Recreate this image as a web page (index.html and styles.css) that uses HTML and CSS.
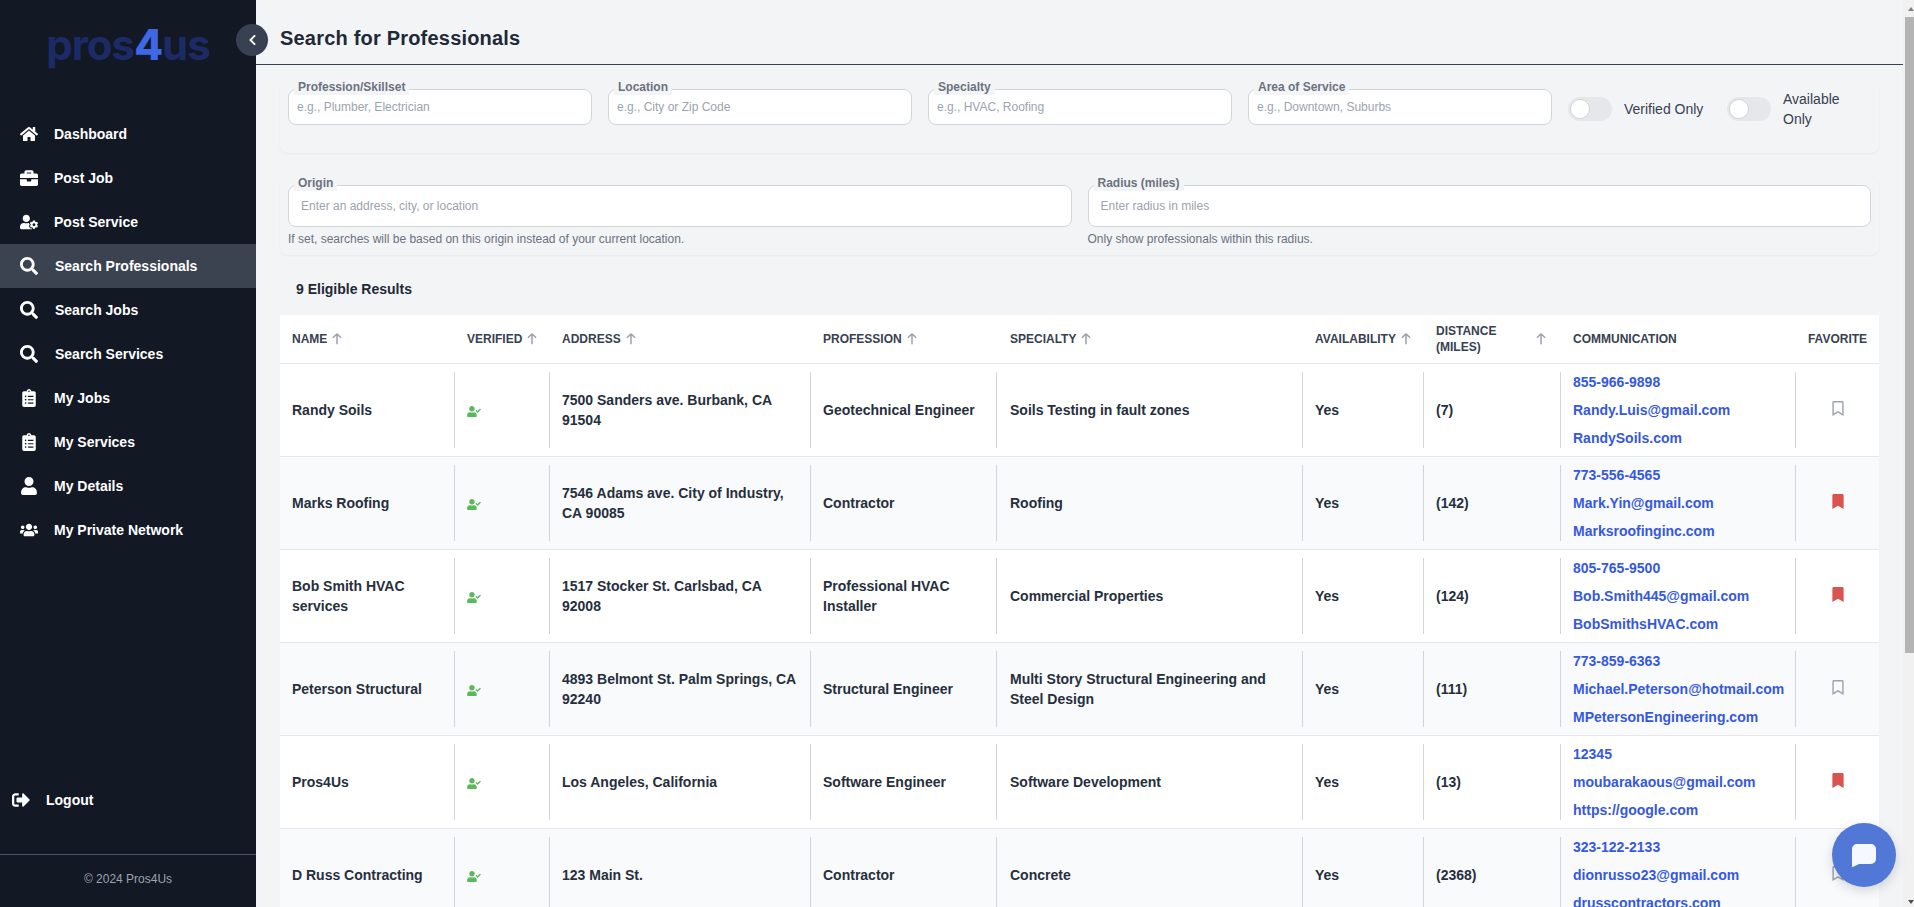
FILE: index.html
```html
<!DOCTYPE html>
<html lang="en">
<head>
<meta charset="utf-8">
<title>Search for Professionals - Pros4Us</title>
<link rel="stylesheet" href="styles.css">
</head>
<body>
<svg class="sprite" aria-hidden="true">
  <symbol id="i-home" viewBox="0 0 576 512"><path d="M280.37 148.26L96 300.11V464a16 16 0 0 0 16 16l112.06-.29a16 16 0 0 0 15.92-16V368a16 16 0 0 1 16-16h64a16 16 0 0 1 16 16v95.64a16 16 0 0 0 16 16.05L464 480a16 16 0 0 0 16-16V300L295.67 148.26a12.19 12.19 0 0 0-15.3 0zM571.6 251.47L488 182.56V44.05a12 12 0 0 0-12-12h-56a12 12 0 0 0-12 12v72.61L318.47 43a48 48 0 0 0-61 0L4.34 251.47a12 12 0 0 0-1.6 16.9l25.5 31A12 12 0 0 0 45.15 301l235.22-193.74a12.19 12.19 0 0 1 15.3 0L530.9 301a12 12 0 0 0 16.9-1.6l25.5-31a12 12 0 0 0-1.7-16.93z"/></symbol>
  <symbol id="i-briefcase" viewBox="0 0 512 512"><path d="M320 336c0 8.84-7.16 16-16 16h-96c-8.84 0-16-7.16-16-16v-48H0v144c0 25.6 22.4 48 48 48h416c25.6 0 48-22.4 48-48V288H320v48zm144-208h-80V80c0-25.6-22.4-48-48-48H176c-25.6 0-48 22.4-48 48v48H48c-25.6 0-48 22.4-48 48v80h512v-80c0-25.6-22.4-48-48-48zm-144 0H192V96h128v32z"/></symbol>
  <symbol id="i-user-cog" viewBox="0 0 640 512"><path d="M610.5 373.3c2.6-14.1 2.6-28.5 0-42.6l25.8-14.9c3-1.7 4.3-5.2 3.3-8.5-6.7-21.6-18.2-41.2-33.2-57.4-2.3-2.5-6-3.1-9-1.4l-25.8 14.9c-10.9-9.3-23.4-16.5-36.9-21.3v-29.8c0-3.4-2.4-6.4-5.7-7.1-22.3-5-45-4.8-66.2 0-3.3.7-5.7 3.7-5.7 7.1v29.8c-13.5 4.8-26 12-36.9 21.3l-25.8-14.9c-2.9-1.7-6.7-1.1-9 1.4-15 16.2-26.5 35.8-33.2 57.4-1 3.3.4 6.8 3.3 8.5l25.8 14.9c-2.6 14.1-2.6 28.5 0 42.6l-25.8 14.9c-3 1.7-4.3 5.2-3.3 8.5 6.7 21.6 18.2 41.1 33.2 57.4 2.3 2.5 6 3.1 9 1.4l25.8-14.9c10.9 9.3 23.4 16.5 36.9 21.3v29.8c0 3.4 2.4 6.4 5.7 7.1 22.3 5 45 4.8 66.2 0 3.3-.7 5.7-3.7 5.7-7.1v-29.8c13.5-4.8 26-12 36.9-21.3l25.8 14.9c2.9 1.7 6.7 1.1 9-1.4 15-16.2 26.5-35.8 33.2-57.4 1-3.3-.4-6.8-3.3-8.5l-25.8-14.9zM496 400.5c-26.8 0-48.5-21.8-48.5-48.5s21.8-48.5 48.5-48.5 48.5 21.8 48.5 48.5-21.7 48.5-48.5 48.5zM224 256c70.7 0 128-57.3 128-128S294.7 0 224 0 96 57.3 96 128s57.3 128 128 128zm201.2 226.5c-2.3-1.2-4.6-2.6-6.8-3.9l-7.9 4.6c-6 3.4-12.8 5.3-19.6 5.3-10.9 0-21.4-4.6-28.9-12.6-18.3-19.8-32.3-43.9-40.2-69.6-5.5-17.7 1.9-36.4 17.9-45.7l7.9-4.6c-.1-2.6-.1-5.2 0-7.8l-7.9-4.6c-16-9.2-23.4-28-17.9-45.7.9-2.9 2.2-5.8 3.2-8.7-3.8-.3-7.5-1.2-11.4-1.2h-16.7c-22.2 10.2-46.9 16-72.9 16s-50.6-5.8-72.9-16h-16.7C60.2 288 0 348.2 0 422.4V464c0 26.5 21.5 48 48 48h352c10.1 0 19.5-3.2 27.2-8.5-1.2-3.8-2-7.7-2-11.8v-9.2z"/></symbol>
  <symbol id="i-search" viewBox="0 0 512 512"><path d="M505 442.7L405.3 343c-4.5-4.5-10.6-7-17-7H372c27.6-35.3 44-79.7 44-128C416 93.1 322.9 0 208 0S0 93.1 0 208s93.1 208 208 208c48.3 0 92.7-16.4 128-44v16.3c0 6.4 2.5 12.5 7 17l99.7 99.7c9.4 9.4 24.6 9.4 33.9 0l28.3-28.3c9.4-9.4 9.4-24.6.1-34zM208 336c-70.7 0-128-57.2-128-128 0-70.7 57.2-128 128-128 70.7 0 128 57.2 128 128 0 70.7-57.2 128-128 128z"/></symbol>
  <symbol id="i-clipboard" viewBox="0 0 384 512"><path d="M336 64h-80c0-35.3-28.7-64-64-64s-64 28.7-64 64H48C21.5 64 0 85.5 0 112v352c0 26.5 21.5 48 48 48h288c26.5 0 48-21.5 48-48V112c0-26.5-21.5-48-48-48zM96 424c-13.3 0-24-10.7-24-24s10.7-24 24-24 24 10.7 24 24-10.7 24-24 24zm0-96c-13.3 0-24-10.7-24-24s10.7-24 24-24 24 10.7 24 24-10.7 24-24 24zm0-96c-13.3 0-24-10.7-24-24s10.7-24 24-24 24 10.7 24 24-10.7 24-24 24zm96-192c13.3 0 24 10.7 24 24s-10.7 24-24 24-24-10.7-24-24 10.7-24 24-24zm128 368c0 4.4-3.6 8-8 8H168c-4.4 0-8-3.6-8-8v-16c0-4.4 3.6-8 8-8h144c4.4 0 8 3.6 8 8v16zm0-96c0 4.4-3.6 8-8 8H168c-4.4 0-8-3.6-8-8v-16c0-4.4 3.6-8 8-8h144c4.4 0 8 3.6 8 8v16zm0-96c0 4.4-3.6 8-8 8H168c-4.4 0-8-3.6-8-8v-16c0-4.4 3.6-8 8-8h144c4.4 0 8 3.6 8 8v16z"/></symbol>
  <symbol id="i-user" viewBox="0 0 448 512"><path d="M224 256c70.7 0 128-57.3 128-128S294.7 0 224 0 96 57.3 96 128s57.3 128 128 128zm89.6 32h-16.7c-22.2 10.2-46.9 16-72.9 16s-50.6-5.8-72.9-16h-16.7C60.2 288 0 348.2 0 422.4V464c0 26.5 21.5 48 48 48h352c26.5 0 48-21.5 48-48v-41.6c0-74.2-60.2-134.4-134.4-134.4z"/></symbol>
  <symbol id="i-users" viewBox="0 0 640 512"><path d="M96 224c35.3 0 64-28.7 64-64s-28.7-64-64-64-64 28.7-64 64 28.7 64 64 64zm448 0c35.3 0 64-28.7 64-64s-28.7-64-64-64-64 28.7-64 64 28.7 64 64 64zm32 32h-64c-17.6 0-33.5 7.1-45.1 18.6 40.3 22.1 68.9 62 75.1 109.4h66c17.7 0 32-14.3 32-32v-32c0-35.3-28.7-64-64-64zm-256 0c61.9 0 112-50.1 112-112S381.9 32 320 32 208 82.1 208 144s50.1 112 112 112zm76.8 32h-8.3c-20.8 10-43.9 16-68.5 16s-47.6-6-68.5-16h-8.3C179.6 288 128 339.6 128 403.2V432c0 26.5 21.5 48 48 48h288c26.5 0 48-21.5 48-48v-28.8c0-63.6-51.6-115.2-115.2-115.2zm-223.7-13.4C161.5 263.1 145.6 256 128 256H64c-35.3 0-64 28.7-64 64v32c0 17.7 14.3 32 32 32h65.9c6.3-47.4 34.9-87.3 75.2-109.4z"/></symbol>
  <symbol id="i-logout" viewBox="0 0 512 512"><path d="M497 273L329 441c-15 15-41 4.5-41-17v-96H152c-13.3 0-24-10.7-24-24v-96c0-13.3 10.7-24 24-24h136V88c0-21.4 25.9-32 41-17l168 168c9.3 9.4 9.3 24.6 0 34zM192 436v-40c0-6.6-5.4-12-12-12H96c-17.7 0-32-14.3-32-32V160c0-17.7 14.3-32 32-32h84c6.6 0 12-5.4 12-12V76c0-6.6-5.4-12-12-12H96c-53 0-96 43-96 96v192c0 53 43 96 96 96h84c6.6 0 12-5.4 12-12z"/></symbol>
  <symbol id="i-check" viewBox="0 0 640 512"><path d="M224 256c70.7 0 128-57.3 128-128S294.7 0 224 0 96 57.3 96 128s57.3 128 128 128zm89.6 32h-16.7c-22.2 10.2-46.9 16-72.9 16s-50.6-5.8-72.9-16h-16.7C60.2 288 0 348.2 0 422.4V464c0 26.5 21.5 48 48 48h352c26.5 0 48-21.5 48-48v-41.6c0-74.2-60.2-134.4-134.4-134.4zm323-128.4l-27.8-28.1c-4.6-4.7-12.1-4.7-16.8-.1l-104.8 104-45.5-45.8c-4.6-4.7-12.1-4.7-16.8-.1l-28.1 27.9c-4.7 4.6-4.7 12.1-.1 16.8l81.7 82.3c4.6 4.7 12.1 4.7 16.8.1l141.3-140.2c4.6-4.7 4.7-12.2.1-16.8z"/></symbol>
  <symbol id="i-mark" viewBox="0 0 384 512"><path d="M0 512V48C0 21.49 21.49 0 48 0h288c26.51 0 48 21.49 48 48v464L192 400 0 512z"/></symbol>
  <symbol id="i-mark-o" viewBox="0 0 384 512"><path d="M336 0H48C21.49 0 0 21.49 0 48v464l192-112 192 112V48c0-26.51-21.49-48-48-48zm0 428.43l-144-84-144 84V54a6 6 0 0 1 6-6h276c3.314 0 6 2.683 6 5.996V428.43z"/></symbol>
  <symbol id="i-chevron" viewBox="0 0 320 512"><path d="M34.52 239.03L228.87 44.69c9.37-9.37 24.57-9.37 33.94 0l22.67 22.67c9.36 9.36 9.37 24.52.04 33.9L131.49 256l154.02 154.75c9.34 9.38 9.32 24.54-.04 33.9l-22.67 22.67c-9.37 9.37-24.57 9.37-33.94 0L34.52 272.97c-9.37-9.37-9.37-24.57 0-33.94z"/></symbol>
  <symbol id="i-up" viewBox="0 0 24 24"><path d="M5 10l7-7m0 0l7 7m-7-7v18" fill="none" stroke="currentColor" stroke-width="2.6"/></symbol>
</svg>

<div class="app">
  <aside class="sidebar">
    <div class="logo"><span class="logo-dim">pros</span><span class="logo-four">4</span><span class="logo-dim">us</span></div>
    <nav class="nav">
      <a class="nav-item"><svg class="ico"><use href="#i-home"/></svg><span>Dashboard</span></a>
      <a class="nav-item"><svg class="ico"><use href="#i-briefcase"/></svg><span>Post Job</span></a>
      <a class="nav-item"><svg class="ico"><use href="#i-user-cog"/></svg><span>Post Service</span></a>
      <a class="nav-item nav-search active"><svg class="ico"><use href="#i-search"/></svg><span>Search Professionals</span></a>
      <a class="nav-item nav-search"><svg class="ico"><use href="#i-search"/></svg><span>Search Jobs</span></a>
      <a class="nav-item nav-search"><svg class="ico"><use href="#i-search"/></svg><span>Search Services</span></a>
      <a class="nav-item"><svg class="ico"><use href="#i-clipboard"/></svg><span>My Jobs</span></a>
      <a class="nav-item"><svg class="ico"><use href="#i-clipboard"/></svg><span>My Services</span></a>
      <a class="nav-item"><svg class="ico"><use href="#i-user"/></svg><span>My Details</span></a>
      <a class="nav-item"><svg class="ico"><use href="#i-users"/></svg><span>My Private Network</span></a>
    </nav>
    <a class="logout"><svg class="ico"><use href="#i-logout"/></svg><span>Logout</span></a>
    <div class="copyright">© 2024 Pros4Us</div>
  </aside>

  <button class="collapse" aria-label="Collapse sidebar"><svg class="chev"><use href="#i-chevron"/></svg></button>

  <main class="main">
    <header class="topbar"><h1 class="title">Search for Professionals</h1></header>
    <div class="content">
      <section class="card filters">
        <div class="field"><label class="float">Profession/Skillset</label><input class="input" placeholder="e.g., Plumber, Electrician"></div>
        <div class="field"><label class="float">Location</label><input class="input" placeholder="e.g., City or Zip Code"></div>
        <div class="field"><label class="float">Specialty</label><input class="input" placeholder="e.g., HVAC, Roofing"></div>
        <div class="field"><label class="float">Area of Service</label><input class="input" placeholder="e.g., Downtown, Suburbs"></div>
        <div class="toggle-wrap"><span class="toggle"><span class="knob"></span></span><span class="toggle-label">Verified Only</span></div>
        <div class="toggle-wrap"><span class="toggle"><span class="knob"></span></span><span class="toggle-label">Available Only</span></div>
      </section>

      <section class="card geo">
        <div>
          <div class="field"><label class="float">Origin</label><input class="input input-lg" placeholder="Enter an address, city, or location"></div>
          <p class="help">If set, searches will be based on this origin instead of your current location.</p>
        </div>
        <div>
          <div class="field"><label class="float">Radius (miles)</label><input class="input input-lg" placeholder="Enter radius in miles"></div>
          <p class="help">Only show professionals within this radius.</p>
        </div>
      </section>

      <h2 class="count">9 Eligible Results</h2>

      <table class="results">
        <colgroup>
          <col class="c-name"><col class="c-ver"><col class="c-addr"><col class="c-prof"><col class="c-spec"><col class="c-avail"><col class="c-dist"><col class="c-comm"><col class="c-fav">
        </colgroup>
        <thead>
          <tr>
            <th><div class="th">NAME<svg class="sort"><use href="#i-up"/></svg></div></th>
            <th><div class="th">VERIFIED<svg class="sort"><use href="#i-up"/></svg></div></th>
            <th><div class="th">ADDRESS<svg class="sort"><use href="#i-up"/></svg></div></th>
            <th><div class="th">PROFESSION<svg class="sort"><use href="#i-up"/></svg></div></th>
            <th><div class="th">SPECIALTY<svg class="sort"><use href="#i-up"/></svg></div></th>
            <th><div class="th">AVAILABILITY<svg class="sort"><use href="#i-up"/></svg></div></th>
            <th><div class="th th-split"><span>DISTANCE (MILES)</span><svg class="sort"><use href="#i-up"/></svg></div></th>
            <th><div class="th">COMMUNICATION</div></th>
            <th><div class="th th-center">FAVORITE</div></th>
          </tr>
        </thead>
        <tbody>
          <tr>
            <td><div class="cell">Randy Soils</div></td>
            <td><div class="cell"><svg class="verified"><use href="#i-check"/></svg></div></td>
            <td><div class="cell">7500 Sanders ave. Burbank, CA 91504</div></td>
            <td><div class="cell">Geotechnical Engineer</div></td>
            <td><div class="cell">Soils Testing in fault zones</div></td>
            <td><div class="cell">Yes</div></td>
            <td><div class="cell">(7)</div></td>
            <td><div class="cell comm"><a>855-966-9898</a><a>Randy.Luis@gmail.com</a><a>RandySoils.com</a></div></td>
            <td><div class="cell fav"><svg class="mark"><use href="#i-mark-o"/></svg></div></td>
          </tr>
          <tr>
            <td><div class="cell">Marks Roofing</div></td>
            <td><div class="cell"><svg class="verified"><use href="#i-check"/></svg></div></td>
            <td><div class="cell">7546 Adams ave. City of Industry, CA 90085</div></td>
            <td><div class="cell">Contractor</div></td>
            <td><div class="cell">Roofing</div></td>
            <td><div class="cell">Yes</div></td>
            <td><div class="cell">(142)</div></td>
            <td><div class="cell comm"><a>773-556-4565</a><a>Mark.Yin@gmail.com</a><a>Marksroofinginc.com</a></div></td>
            <td><div class="cell fav"><svg class="mark on"><use href="#i-mark"/></svg></div></td>
          </tr>
          <tr>
            <td><div class="cell">Bob Smith HVAC services</div></td>
            <td><div class="cell"><svg class="verified"><use href="#i-check"/></svg></div></td>
            <td><div class="cell">1517 Stocker St. Carlsbad, CA 92008</div></td>
            <td><div class="cell">Professional HVAC Installer</div></td>
            <td><div class="cell">Commercial Properties</div></td>
            <td><div class="cell">Yes</div></td>
            <td><div class="cell">(124)</div></td>
            <td><div class="cell comm"><a>805-765-9500</a><a>Bob.Smith445@gmail.com</a><a>BobSmithsHVAC.com</a></div></td>
            <td><div class="cell fav"><svg class="mark on"><use href="#i-mark"/></svg></div></td>
          </tr>
          <tr>
            <td><div class="cell">Peterson Structural</div></td>
            <td><div class="cell"><svg class="verified"><use href="#i-check"/></svg></div></td>
            <td><div class="cell">4893 Belmont St. Palm Springs, CA 92240</div></td>
            <td><div class="cell">Structural Engineer</div></td>
            <td><div class="cell">Multi Story Structural Engineering and Steel Design</div></td>
            <td><div class="cell">Yes</div></td>
            <td><div class="cell">(111)</div></td>
            <td><div class="cell comm"><a>773-859-6363</a><a>Michael.Peterson@hotmail.com</a><a>MPetersonEngineering.com</a></div></td>
            <td><div class="cell fav"><svg class="mark"><use href="#i-mark-o"/></svg></div></td>
          </tr>
          <tr>
            <td><div class="cell">Pros4Us</div></td>
            <td><div class="cell"><svg class="verified"><use href="#i-check"/></svg></div></td>
            <td><div class="cell">Los Angeles, California</div></td>
            <td><div class="cell">Software Engineer</div></td>
            <td><div class="cell">Software Development</div></td>
            <td><div class="cell">Yes</div></td>
            <td><div class="cell">(13)</div></td>
            <td><div class="cell comm"><a>12345</a><a>moubarakaous@gmail.com</a><a>https://google.com</a></div></td>
            <td><div class="cell fav"><svg class="mark on"><use href="#i-mark"/></svg></div></td>
          </tr>
          <tr>
            <td><div class="cell">D Russ Contracting</div></td>
            <td><div class="cell"><svg class="verified"><use href="#i-check"/></svg></div></td>
            <td><div class="cell">123 Main St.</div></td>
            <td><div class="cell">Contractor</div></td>
            <td><div class="cell">Concrete</div></td>
            <td><div class="cell">Yes</div></td>
            <td><div class="cell">(2368)</div></td>
            <td><div class="cell comm"><a>323-122-2133</a><a>dionrusso23@gmail.com</a><a>drusscontractors.com</a></div></td>
            <td><div class="cell fav"><svg class="mark"><use href="#i-mark-o"/></svg></div></td>
          </tr>
        </tbody>
      </table>
    </div>
  </main>

  <div class="scrollbar" aria-hidden="true">
    <div class="sb-btn"><span class="sb-up"></span></div>
    <div class="sb-thumb"></div>
    <div class="sb-track"></div>
    <div class="sb-btn"><span class="sb-down"></span></div>
  </div>

  <button class="chat" aria-label="Open chat">
    <svg class="chat-ico" viewBox="0 0 24 23"><path d="M5 0h14a5 5 0 0 1 5 5v10a5 5 0 0 1-5 5H7l-6.2 3c-.4.1-.8-.2-.8-.6V5a5 5 0 0 1 5-5z"/></svg>
  </button>
</div>
</body>
</html>
```
FILE: styles.css
```css
* { box-sizing: border-box; }
html, body { margin: 0; height: 100%; overflow: hidden; }
body { font-family: "Liberation Sans", Arial, sans-serif; color: #1f2937; background: #f3f4f6; }
.sprite { display: none; }

.app { position: relative; display: flex; height: 100vh; }

/* Sidebar */
.sidebar { flex: 0 0 256px; width: 256px; height: 100%; background: #131825; display: flex; flex-direction: column; }
.logo { height: 112px; padding-top: 19px; text-align: center; font-family: Inter, "Liberation Sans", sans-serif; font-size: 42px; line-height: 52px; font-weight: 700; letter-spacing: -1px; }
.logo-dim { color: #1c2b66; }
.logo-four { color: #3f68e6; font-weight: 800; }
.nav { display: flex; flex-direction: column; flex: 1; }
.nav-item { display: flex; align-items: center; height: 44px; padding-left: 20px; gap: 16px; color: #fff; font-size: 14px; font-weight: 700; }
.nav-search { gap: 17px; }
.active { background: #3b4351; }
.ico { width: 18px; height: 18px; fill: #fff; flex: none; }
.logout { display: flex; align-items: center; height: 44px; padding-left: 12px; gap: 16px; color: #fff; font-size: 14px; font-weight: 700; margin-bottom: 32px; }
.copyright { height: 53px; border-top: 1px solid #4b5563; text-align: center; color: #9ca3af; font-size: 12px; line-height: 48px; }

.collapse { position: absolute; left: 236px; top: 24px; width: 32px; height: 32px; border: 0; border-radius: 50%; background: #374151; padding: 0; display: flex; align-items: center; justify-content: center; z-index: 3; }
.chev { width: 9px; height: 12px; fill: #fff; }

/* Main */
.main { flex: 1; min-width: 0; height: 100%; overflow: hidden; }

.scrollbar { flex: 0 0 11px; height: 100%; background: #f1f1f1; display: flex; flex-direction: column; }
.sb-btn { flex: none; height: 17px; padding: 7px 0 0 5px; }
.sb-up { display: block; width: 0; height: 0; border-left: 3px solid transparent; border-right: 3px solid transparent; border-bottom: 4px solid #808080; }
.sb-down { display: block; width: 0; height: 0; margin-top: 3px; border-left: 3px solid transparent; border-right: 3px solid transparent; border-top: 4px solid #505050; }
.sb-thumb { flex: none; height: 636px; margin-left: 2px; background: #b4b4b4; }
.sb-track { flex: 1; }

.topbar { height: 65px; padding: 12px 24px 0; border-bottom: 1px solid #374151; display: flex; align-items: center; }
.title { margin: 0; font-size: 20px; font-weight: 700; letter-spacing: 0.2px; color: #1f2937; }
.content { padding: 17px 24px 0; }

.card { background: #f3f4f6; border-radius: 8px; box-shadow: 0 1px 2px rgba(0, 0, 0, 0.05); }
.filters { display: grid; grid-template-columns: repeat(4, 304px) 143px 1fr; gap: 16px; height: 71px; padding: 7px 8px 0; }
.geo { display: grid; grid-template-columns: 1fr 1fr; gap: 16px; margin-top: 24px; height: 78px; padding: 8px 8px 0; }

.field { position: relative; }
.float { position: absolute; left: 6px; top: -10px; padding: 0 4px; background: #f3f4f6; color: #6b7280; font-size: 12px; line-height: 16px; font-weight: 700; }
.input { display: block; width: 100%; height: 36px; padding: 0 8px; border: 1px solid #d1d5db; border-radius: 8px; background: #fff; font-family: inherit; font-size: 12px; color: #1f2937; outline: none; }
.input::placeholder { color: #9ca3af; opacity: 1; }
.input-lg { height: 42px; padding: 0 12px; }
.help { margin: 4px 0 0; font-size: 12px; line-height: 16px; color: #6b7280; }

.toggle-wrap { display: flex; align-items: center; gap: 12px; height: 40px; }
.toggle { position: relative; flex: none; width: 44px; height: 24px; border-radius: 12px; background: #e5e7eb; }
.knob { position: absolute; left: 2px; top: 2px; width: 20px; height: 20px; border-radius: 50%; background: #fff; border: 1px solid #d1d5db; }
.toggle-label { font-size: 14px; line-height: 20px; color: #374151; }

.count { margin: 24px 0 0 16px; height: 20px; font-size: 14px; line-height: 20px; font-weight: 700; color: #1f2937; }

/* Table */
.results { margin-top: 16px; width: 1599px; border-collapse: separate; border-spacing: 0; table-layout: fixed; background: #fff; }
.c-name { width: 174px; } .c-ver { width: 95px; } .c-addr { width: 261px; } .c-prof { width: 186px; } .c-spec { width: 306px; }
.c-avail { width: 121px; } .c-dist { width: 137px; } .c-comm { width: 235px; } .c-fav { width: 84px; }
.results th { height: 49px; padding: 0 12px 0 13px; border-bottom: 1px solid #e5e7eb; text-align: left; font-size: 12px; line-height: 16px; font-weight: 700; color: #374151; }
.results th:first-child { padding-left: 12px; }
.results th:nth-child(5) { padding-left: 14px; }
.th { display: flex; align-items: center; gap: 3px; }
.th-split { justify-content: space-between; }
.th-center { justify-content: center; }
.sort { flex: none; width: 14px; height: 14px; color: #9ca3af; }
.results td { padding: 8px 0; border-bottom: 1px solid #e5e7eb; font-size: 14px; line-height: 20px; font-weight: 700; color: #262f3d; }
.results tbody tr:nth-child(even) td { background: #f9fafb; }
.cell { display: flex; align-items: center; min-height: 76px; padding: 0 12px; border-left: 1px solid #d1d5db; }
.results td:first-child .cell { border-left: 0; }
.results td:nth-child(5) .cell { padding-left: 13px; }
.comm { flex-direction: column; align-items: flex-start; gap: 8px; white-space: nowrap; }
.comm a { color: #3558e0; }
.verified { width: 14px; height: 11px; fill: #5cb85c; margin-top: 2px; }
.fav { justify-content: center; }
.mark { width: 12px; height: 15px; fill: #9ca3af; margin-bottom: 4px; }
.mark.on { fill: #d9534f; }

/* Chat */
.chat { position: absolute; left: 1832px; top: 823px; width: 64px; height: 64px; padding: 0; border: 0; border-radius: 50%; background: #5178d6; box-shadow: 0 4px 12px rgba(0, 0, 0, 0.15); display: flex; align-items: center; justify-content: center; z-index: 4; }
.chat-ico { width: 24px; height: 23px; fill: #f5f8fe; }
```
